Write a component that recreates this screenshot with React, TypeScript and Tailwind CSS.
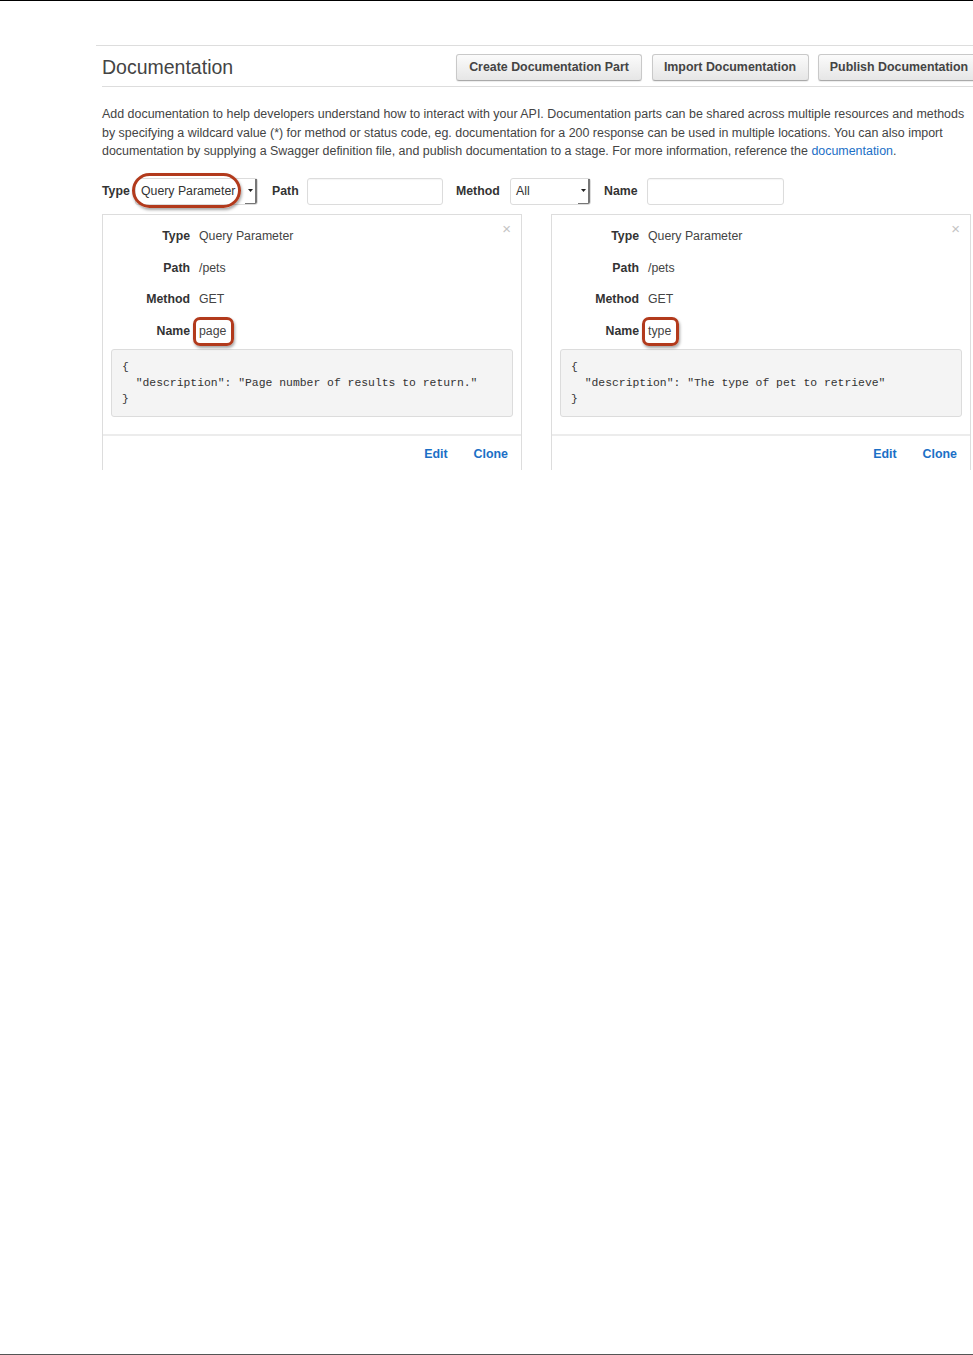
import React from 'react';

const font = { fontFamily: '"Liberation Sans", Arial, Helvetica, sans-serif' };

function Highlight({ className }: { className: string }) {
  return (
    <span
      className={`pointer-events-none absolute border-[3px] border-[#b23a1c] shadow-[1px_2px_3px_rgba(0,0,0,0.35)] ${className}`}
    />
  );
}

function SelectBox({ value, width, children }: { value: string; width: string; children?: React.ReactNode }) {
  return (
    <div className={`relative flex h-[27px] items-center rounded-[3px] border border-[#dcdcdc] bg-white ${width}`}>
      <span className="flex-1 pl-[5px] text-[12.3px] text-[#333]">{value}</span>
      <span className="flex h-full w-[12px] items-center justify-center rounded-br-[2px] border-r-[2px] border-b border-[#777]">
        <svg width="5" height="3" viewBox="0 0 5 3">
          <path d="M0 0h5L2.5 3z" fill="#222" />
        </svg>
      </span>
      {children}
    </div>
  );
}

function TextBox({ width }: { width: string }) {
  return <div className={`h-[27px] rounded-[3px] border border-[#dcdcdc] bg-white shadow-[inset_0_1px_1px_rgba(0,0,0,0.04)] ${width}`} />;
}

function ToolButton({ label, width }: { label: string; width: string }) {
  return (
    <button
      className={`h-[27px] rounded-[3px] border border-[#c9c9c9] border-b-[#aaa] bg-gradient-to-b from-[#fbfbfb] to-[#e6e6e6] text-[12.4px] font-bold text-[#444] shadow-[0_1px_1px_rgba(0,0,0,0.08)] ${width}`}
    >
      {label}
    </button>
  );
}

interface Part {
  name: string;
  description: string;
}

function PartCard({ part }: { part: Part }) {
  const rows: [string, React.ReactNode][] = [
    ['Type', 'Query Parameter'],
    ['Path', '/pets'],
    ['Method', 'GET'],
    [
      'Name',
      <span className="relative inline-block">
        {part.name}
        <Highlight className="-left-[6px] -right-[8px] -top-[5px] -bottom-[6px] rounded-[7px]" />
      </span>,
    ],
  ];

  return (
    <div className="relative h-[256px] w-[420px] border border-b-0 border-[#dddddd] bg-white">
      <span className="absolute right-[10px] top-[6px] text-[15px] leading-none text-[#c4c4c4]">×</span>
      <div className="pt-[6px]">
        {rows.map(([label, value]) => (
          <div key={label} className="flex h-[31.6px] items-center">
            <div className="w-[87px] text-right text-[12.3px] font-bold text-[#333]">{label}</div>
            <div className="ml-[9px] text-[12.3px] text-[#444]">{value}</div>
          </div>
        ))}
      </div>
      <div
        className="mx-[8px] mt-[2px] whitespace-pre rounded-[3px] border border-[#dcdcdc] bg-[#f4f4f4] px-[10px] py-[9px] text-[11.4px] leading-[16px] text-[#333]"
        style={{ fontFamily: '"Liberation Mono", "DejaVu Sans Mono", monospace' }}
      >
        {`{\n  "description": "${part.description}"\n}`}
      </div>
      <div className="mt-[17px] flex h-[36px] items-center justify-end gap-[26px] border-t-2 border-[#ececec] pr-[13px] pt-[2px] text-[12.4px] font-bold text-[#1b6fc6]">
        <a href="#">Edit</a>
        <a href="#">Clone</a>
      </div>
    </div>
  );
}

export default function App() {
  const parts: Part[] = [
    { name: 'page', description: 'Page number of results to return.' },
    { name: 'type', description: 'The type of pet to retrieve' },
  ];

  return (
    <div
      className="relative h-[1355px] w-[973px] overflow-hidden border-t border-b border-t-black border-b-[#555] bg-white text-[#444]"
      style={font}
    >
      <div className="ml-[96px] mt-[44px] w-[890px] border-t border-[#dddddd]">
        <div className="ml-[6px] flex h-[41px] items-center border-b border-[#dddddd] pt-[3px]">
          <h1 className="text-[19.5px] text-[#444]">Documentation</h1>
          <div className="ml-auto mr-[6px] flex gap-[9.5px]">
            <ToolButton label="Create Documentation Part" width="w-[186px]" />
            <ToolButton label="Import Documentation" width="w-[157px]" />
            <ToolButton label="Publish Documentation" width="w-[162px]" />
          </div>
        </div>

        <p className="ml-[6px] mt-[18px] whitespace-nowrap text-[12.45px] leading-[18.5px] text-[#444]">
          Add documentation to help developers understand how to interact with your API. Documentation parts can be shared across multiple resources and methods
          <br />
          by specifying a wildcard value (*) for method or status code, eg. documentation for a 200 response can be used in multiple locations. You can also import
          <br />
          documentation by supplying a Swagger definition file, and publish documentation to a stage. For more information, reference the{' '}
          <a href="#" className="text-[#1b6fc6]">documentation</a>.
        </p>

        <div className="ml-[6px] mt-[17px] flex items-center text-[12.3px]">
          <span className="w-[30px] font-bold text-[#333]">Type</span>
          <div className="ml-[3px]">
            <SelectBox value="Query Parameter" width="w-[123px]">
              <Highlight className="-left-[4px] -top-[6px] -bottom-[4px] w-[109px] rounded-full" />
            </SelectBox>
          </div>
          <span className="ml-[14px] w-[35px] font-bold text-[#333]">Path</span>
          <TextBox width="w-[136px]" />
          <span className="ml-[13px] w-[54px] font-bold text-[#333]">Method</span>
          <SelectBox value="All" width="w-[81px]" />
          <span className="ml-[13px] w-[43px] font-bold text-[#333]">Name</span>
          <TextBox width="w-[137px]" />
        </div>

        <div className="ml-[6px] mt-[9px] flex gap-[29px]">
          {parts.map((p) => (
            <PartCard key={p.name} part={p} />
          ))}
        </div>
      </div>
    </div>
  );
}
